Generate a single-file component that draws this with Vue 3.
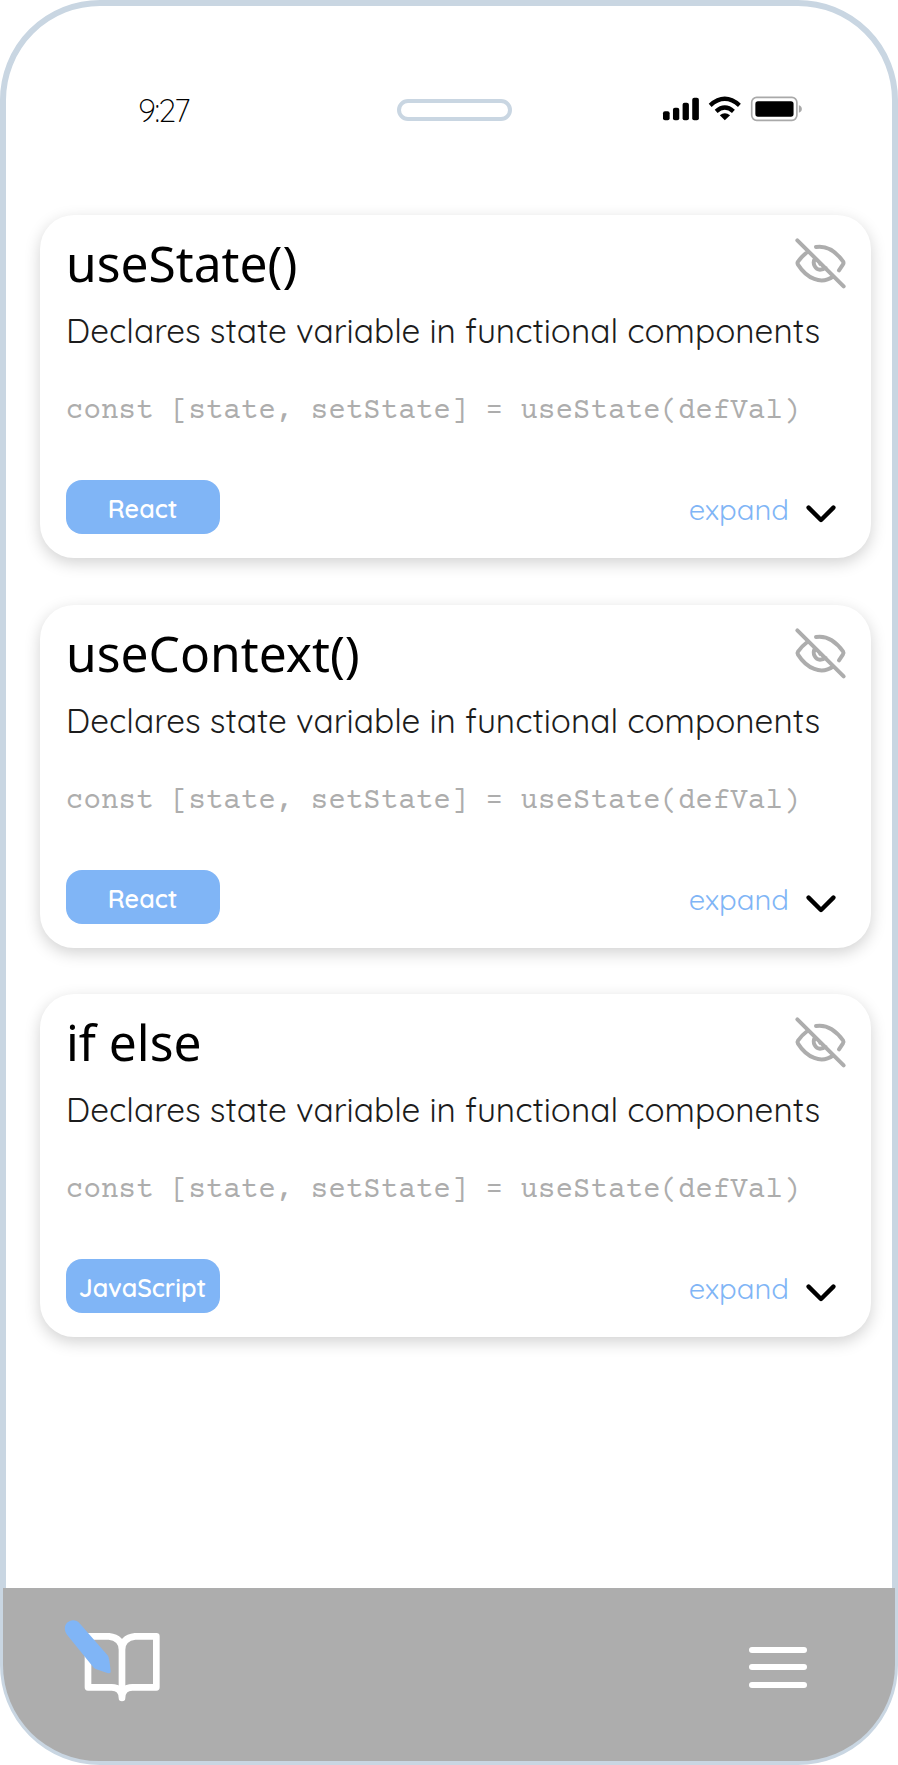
<script setup>
const cards = [
  { title: 'useState()', tag: 'React' },
  { title: 'useContext()', tag: 'React' },
  { title: 'if else', tag: 'JavaScript' },
]
</script>

<template>
  <div class="phone">
    <header class="status">
      <span class="time">9:27</span>
      <span class="speaker"></span>
      <svg class="indicators" viewBox="60 40 440 100">
        <rect x="69" y="95" width="20" height="27" rx="6" />
        <rect x="99" y="84" width="19" height="38" rx="6" />
        <rect x="128" y="69" width="19" height="53" rx="6" />
        <rect x="157" y="54" width="20" height="68" rx="6" />
        <g fill="none" stroke="#000" stroke-width="13">
          <path d="M211 77Q255 38 299 77" />
          <path d="M229 95Q255 72 281 95" />
        </g>
        <path d="M240 107Q255 94 271 107L255 122Z" />
        <rect x="336" y="53" width="136" height="69" rx="15" fill="none" stroke="#a9a9a9" stroke-width="5" />
        <rect x="347" y="65" width="115" height="46" rx="8" />
        <path d="M478 77Q487 80 487 88T478 99Z" fill="#a9a9a9" />
      </svg>
    </header>

    <main class="cards">
      <article v-for="card in cards" :key="card.title" class="card">
        <div class="head">
          <h2>{{ card.title }}</h2>
          <svg class="eye" viewBox="42 52 160 160">
            <path d="M52 62L191 200M108 82C145 76 170 99 189 125Q192 130 189 134L177 152M82 97Q67 108 54 126Q51 130 54 135C80 176 123 197 160 170M104 118C96 132 107 150 120 150Q130 150 137 145" />
            <path d="M117 125L127 135L118 138Q113 133 117 125Z" class="pupil" />
          </svg>
        </div>
        <p class="desc">Declares state variable in functional components</p>
        <code>const [state, setState] = useState(defVal)</code>
        <footer>
          <span class="tag">{{ card.tag }}</span>
          <span class="expand">expand</span>
          <svg class="chevron" viewBox="0 0 30 18"><path d="M2.6 2.6L15 15L27.4 2.6" /></svg>
        </footer>
      </article>
    </main>

    <nav>
      <svg class="book" viewBox="190 145 295 255">
        <path class="pages" d="M265 200H328Q367 205 367 240Q367 205 406 200H470V353H398Q367 353 367 385Q367 353 336 353H265ZM367 235V385" />
        <path class="pen" d="M202 195C180 165 218 136 241 162L325 258Q329 264 333 304Q334 312 325 311L288 298Q283 296 278 289Z" />
      </svg>
      <div class="menu"><i></i><i></i><i></i></div>
    </nav>
  </div>
</template>

<style>
body {
  background: #fff;
}
</style>

<style scoped>
* {
  box-sizing: border-box;
}
.phone {
  width: 898px;
  height: 1765px;
  border: 6px solid #c9d6e2;
  border-radius: 100px;
  display: flex;
  flex-direction: column;
  background: #fff;
  font-family: Quicksand, Lato, sans-serif;
}
.status {
  height: 209px;
  padding: 84px 86px 0 132px;
  display: flex;
  align-items: flex-start;
}
.time {
  width: 259px;
  height: 50px;
  font-size: 32px;
  line-height: 40px;
  font-weight: 300;
  letter-spacing: -1.1px;
}
.speaker {
  width: 116px;
  height: 22px;
  margin: 9px 0 0 0.5px;
  border: 4px solid #c9d6e2;
  border-radius: 11px;
}
.indicators {
  width: 146.67px;
  height: 33.33px;
  margin: 3.4px 0 0 147.5px;
}
.cards {
  flex: 1;
  padding: 0 21px 0 34px;
  display: flex;
  flex-direction: column;
  gap: 46.7px;
}
.card {
  height: 343px;
  padding: 0 24.5px 0 26px;
  border-radius: 34px;
  background: #fff;
  box-shadow: 0 5px 16px rgba(0, 0, 0, 0.18);
  display: flex;
  flex-direction: column;
}
.head {
  height: 89px;
  display: flex;
  justify-content: space-between;
}
h2 {
  margin: 15px 0 0;
  font: 400 49.7px/67px 'Noto Sans', sans-serif;
}
.eye {
  width: 53.33px;
  height: 53.33px;
  margin: 22px -1px 0 0;
}
.eye path {
  fill: none;
  stroke: #adadad;
  stroke-width: 12;
  stroke-linecap: round;
  stroke-linejoin: round;
}
.eye .pupil {
  fill: #adadad;
  stroke-width: 1;
}
.desc {
  margin: 0;
  height: 88px;
  font-size: 33.33px;
  line-height: 54px;
  font-weight: 400;
  color: #1c1c1c;
  white-space: nowrap;
}
code {
  height: 88px;
  font: 29.17px/40px 'Courier Prime', 'Liberation Mono', monospace;
  color: #adadad;
  white-space: nowrap;
}
footer {
  display: flex;
  align-items: flex-start;
}
.tag {
  width: 154px;
  height: 54px;
  padding-right: 1px;
  border-radius: 16px;
  background: #80b5f6;
  color: #fff;
  font-size: 25px;
  font-weight: 600;
  line-height: 57px;
  text-align: center;
}
.expand {
  margin-left: auto;
  font-size: 29.2px;
  line-height: 58px;
  font-weight: 400;
  color: #80b5f6;
}
.chevron {
  width: 30px;
  height: 18px;
  margin: 25px 11px 0 16.5px;
  fill: none;
  stroke: #000;
  stroke-width: 4.4;
  stroke-linecap: round;
  stroke-linejoin: round;
}
nav {
  height: 173px;
  margin: 0 -2.5px -2px -3px;
  padding: 30px 88px 0 60px;
  border-radius: 0 0 96px 96px;
  background: #adadad;
  display: flex;
  justify-content: space-between;
}
.book {
  width: 98.33px;
  height: 85px;
}
.pages {
  fill: none;
  stroke: #fff;
  stroke-width: 20;
  stroke-linejoin: round;
  stroke-linecap: round;
}
.pen {
  fill: #80b5f6;
}
.menu {
  width: 58px;
  margin-top: 29px;
  display: flex;
  flex-direction: column;
  gap: 11.3px;
}
.menu i {
  height: 6px;
  border-radius: 3px;
  background: #fff;
}
</style>
